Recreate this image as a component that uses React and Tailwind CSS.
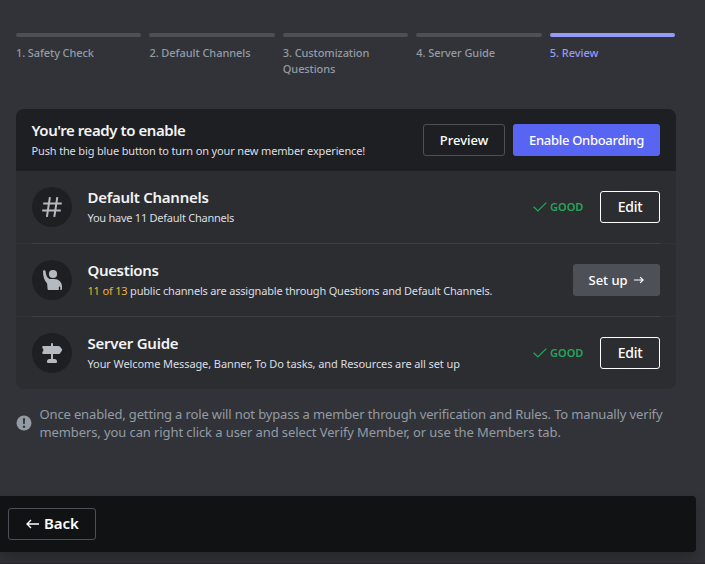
import React from "react";

const steps = [
  { label: "1. Safety Check", track: "tracking-[-0.1px]" },
  { label: "2. Default Channels", track: "tracking-[-0.06px]" },
  { label: "3. Customization Questions", track: "tracking-[-0.1px]" },
  { label: "4. Server Guide", track: "tracking-[-0.06px]" },
  { label: "5. Review", active: true, track: "tracking-[-0.02px]" },
];

function HashIcon() {
  return (
    <svg width="24" height="24" viewBox="0 0 24 24" fill="none" stroke="#b5bac1" strokeWidth="2">
      <path d="M9.9 2.2 6.9 21.8M17.3 2.2l-3 19.6M3.2 8.5h18.6M2.2 15.5h18.6" />
    </svg>
  );
}

function PersonIcon() {
  return (
    <svg width="24" height="24" viewBox="0 0 24 24" fill="#b5bac1">
      <circle cx="13" cy="6" r="4.1" />
      <path d="M3 3.6C3 2.7 3.600 2.200 4.300 2.200c.8 0 1.200.5 1.300 1.200.3 3.300 1.300 6.100 3.900 7.600h4.700c4.600 0 7.800 3.400 7.800 7.400v2.300c0 .8-.4 1.300-1.100 1.300h-.6v-2.500c0-.5-.3-.9-.7-.9s-.8.4-.8.900V22H8.500c-.5 0-.9-.4-.9-.9l-.5-5.600C4.300 12.600 3 8.500 3 3.600Z" />
    </svg>
  );
}

function SignIcon() {
  return (
    <svg width="24" height="24" viewBox="0 0 24 24" fill="#b5bac1">
      <path d="M11 3a1 1 0 1 1 2 0v2h5.500c.6 0 1 .2 1.400.6l2 2.500c.4.5.4 1.200 0 1.700l-2 2.600c-.4.400-.8.600-1.400.600H13v5h1.500A2.500 2.500 0 0 1 17 20.500V21a1 1 0 0 1-1 1H8a1 1 0 0 1-1-1v-.5A2.500 2.500 0 0 1 9.500 18H11v-5H3.200c-.8 0-1.300-.8-.9-1.500L3.500 9 2.300 6.500C1.900 5.800 2.400 5 3.200 5H11V3Z" />
    </svg>
  );
}

function Good() {
  return (
    <div className="mr-4 flex items-center text-[#23a55a]">
      <svg width="14" height="10" viewBox="0 0 14 10" fill="none" stroke="currentColor" strokeWidth="1.3">
        <path d="M.6 4.700 4.900 8.900 13.300.600" />
      </svg>
      <span className="ml-[3px] w-[34px] whitespace-nowrap text-[11px] font-semibold leading-4">GOOD</span>
    </div>
  );
}

function EditButton() {
  return (
    <button className="h-8 w-[60px] rounded-[3px] border border-white pb-px text-[14px] font-medium leading-5 tracking-[-0.3px] text-white">Edit</button>
  );
}

function Row({ icon, title, titleTrack, text, action, last }) {
  return (
    <div>
      <div className="flex h-[72px] items-center px-4">
        <div className="flex size-10 shrink-0 items-center justify-center rounded-full bg-[#1e1f22]">{icon}</div>
        <div className="ml-[15.5px] flex-1 whitespace-nowrap">
          <div className={"-mt-px text-[15px] font-semibold leading-5 text-[#f2f3f5] " + titleTrack}>{title}</div>
          <div className="mt-[3px] text-[11px] leading-4 text-[#dbdee1]">{text}</div>
        </div>
        {action}
      </div>
      {!last && (
        <div className="h-px bg-[#323337] px-4">
          <div className="h-px bg-[#3f4147]" />
        </div>
      )}
    </div>
  );
}

export default function App() {
  return (
    <div className="flex h-[564px] w-[705px] flex-col overflow-hidden bg-[#313338] font-['Noto_Sans',sans-serif]">
      <div className="ml-4 mt-[33px] flex h-[76px] w-[659px] shrink-0 gap-2">
        {steps.map((s) => (
          <div key={s.label} className="flex-1">
            <div className={"h-1 rounded-full " + (s.active ? "bg-[#949cf7]" : "bg-[#4e5058]")} />
            <div className={"mt-2 text-[11px] font-medium leading-4 " + s.track + (s.active ? " text-[#949cf7]" : " text-[#949ba4]")}>
              {s.label}
            </div>
          </div>
        ))}
      </div>

      <div className="ml-4 h-[280px] w-[660px] shrink-0 overflow-hidden rounded-lg bg-[#2b2d31]">
        <div className="flex h-[62px] items-center bg-[#1e1f22] pl-[15.5px] pr-4">
          <div className="flex-1 whitespace-nowrap">
            <div className="text-[15px] font-semibold leading-5 tracking-[-0.43px] text-[#f2f3f5]">You're ready to enable</div>
            <div className="mt-px text-[11px] leading-5 tracking-[-0.15px] text-[#dbdee1]">
              Push the big blue button to turn on your new member experience!
            </div>
          </div>
          <button className="flex h-8 w-[82px] items-center justify-center rounded-[3px] border border-[#4e5058] text-[13px] font-medium leading-5 text-white">Preview</button>
          <button className="ml-2 flex h-8 w-[147px] items-center justify-center whitespace-nowrap rounded-[3px] bg-[#5865f2] text-[13px] font-medium leading-5 tracking-[-0.3px] text-white">Enable Onboarding</button>
        </div>
        <Row
          icon={<HashIcon />}
          title="Default Channels"
          titleTrack="tracking-[-0.27px]"
          text={<span className="tracking-[-0.25px]">You have 11 Default Channels</span>}
          action={<><Good /><EditButton /></>}
        />
        <Row
          icon={<PersonIcon />}
          title="Questions"
          titleTrack="tracking-[-0.35px]"
          text={<span className="tracking-[-0.18px]"><span className="text-[#f0b232]">11 of 13</span> public channels are assignable through Questions and Default Channels.</span>}
          action={
            <button className="flex h-8 w-[87px] items-center rounded-[3px] bg-[#4e5058] pl-[15.5px] text-[13px] font-medium text-white">
              <span className="w-[39px] whitespace-nowrap pt-px">Set up</span>
              <svg className="ml-1.5" width="10" height="8" viewBox="0 0 10 8" fill="none" stroke="currentColor" strokeWidth="1.2">
                <path d="M0 4h9M6.200 1.200 9 4 6.200 6.800" />
              </svg>
            </button>
          }
        />
        <Row
          icon={<SignIcon />}
          title="Server Guide"
          titleTrack="tracking-[-0.25px]"
          text={<span className="tracking-[-0.1px]">Your Welcome Message, Banner, To Do tasks, and Resources are all set up</span>}
          action={<><Good /><EditButton /></>}
          last
        />
      </div>

      <div className="ml-4 mt-4 flex h-[91px] shrink-0 text-[#949ba4]">
        <svg className="mt-[10px]" width="16" height="16" viewBox="0 0 16 16">
          <circle cx="8" cy="8" r="7.500" fill="currentColor" />
          <path d="M6.900 3.200h2.200l-.3 5.800H7.200z" fill="#313338" />
          <circle cx="8" cy="11.700" r="1.200" fill="#313338" />
        </svg>
        <div className="ml-[7.5px] whitespace-nowrap text-[13px] leading-[18px]">
          <div className="tracking-[-0.145px]">Once enabled, getting a role will not bypass a member through verification and Rules. To manually verify</div>
          <div className="tracking-[-0.1px]">members, you can right click a user and select Verify Member, or use the Members tab.</div>
        </div>
      </div>

      <div className="flex h-14 w-[696px] shrink-0 items-center rounded-r-[4px] bg-[#111214] pl-2 shadow-[0_8px_16px_rgba(0,0,0,0.24)]">
        <button className="flex h-8 w-[88px] items-center rounded-[3px] border border-[#4e5058] pl-[17px] text-[15px] font-semibold text-white">
          <svg width="13" height="10" viewBox="0 0 13 10" fill="none" stroke="currentColor" strokeWidth="1.300">
            <path d="M13 5H1M5 1 1 5l4 4" />
          </svg>
          <span className="-mt-px ml-[5px] pb-px tracking-[-0.1px]">Back</span>
        </button>
      </div>
      <div className="mt-[11px] h-px shrink-0 bg-[#29232b]" />
    </div>
  );
}
